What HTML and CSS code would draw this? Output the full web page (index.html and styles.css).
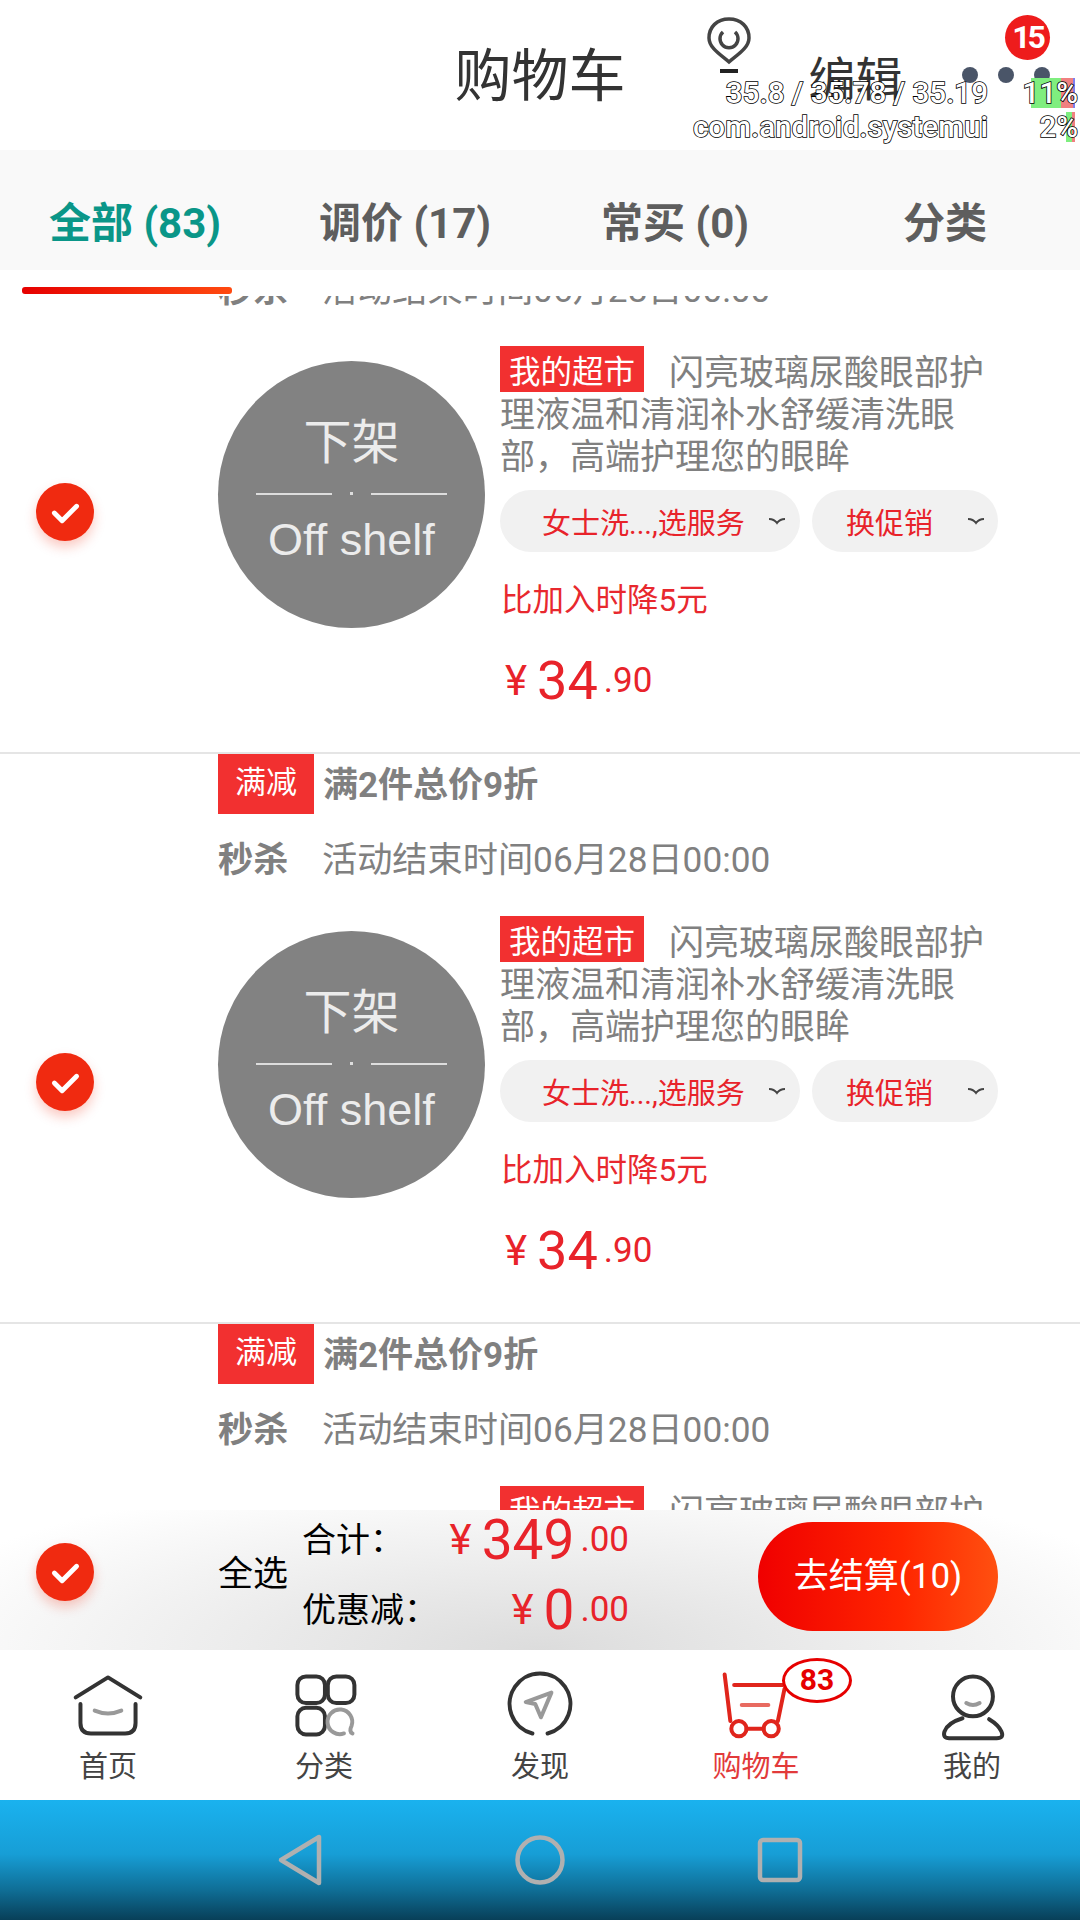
FILE: index.html
```html
<!DOCTYPE html>
<html lang="zh-CN">
<head>
  <meta charset="utf-8">
  <title>购物车</title>
  <link rel="stylesheet" href="styles.css">
</head>
<body>
<div class="app">
  <header class="header">
    <div></div>
    <h1 class="header-title">购物车</h1>
    <div class="header-edit">编辑</div>
  </header>

  <nav class="tabs">
    <div class="tab active">全部 (83)</div>
    <div class="tab">调价 (17)</div>
    <div class="tab">常买 (0)</div>
    <div class="tab">分类</div>
  </nav>
  <div class="tab-strip"><div class="tab-indicator"></div></div>

  <div class="list">
    <div class="list-inner">
      <section class="item">
        <div class="promo-row"><span class="promo-badge">满减</span><span class="promo-text">满2件总价9折</span></div>
        <div class="flash-row"><span class="flash-label">秒杀</span><span class="flash-time">活动结束时间06月28日00:00</span></div>
        <div class="item-main">
          <div class="item-check"><span class="check"><svg viewBox="0 0 60 60"><path d="M19 31l8 8 15-15" /></svg></span></div>
          <div class="shelf">
            <div class="shelf-cn">下架</div>
            <div class="shelf-line"><i></i><b></b><i></i></div>
            <div class="shelf-en">Off shelf</div>
          </div>
          <div class="info">
            <div class="title"><span class="shop-badge">我的超市</span>闪亮玻璃尿酸眼部护理液温和清润补水舒缓清洗眼部，高端护理您的眼眸</div>
            <div class="pills">
              <div class="pill pill-service">女士洗...,选服务<svg class="chev" viewBox="0 0 18 8"><path d="M1 2q5 0 8 4q3-4 8-4" /></svg></div>
              <div class="pill pill-promo">换促销<svg class="chev" viewBox="0 0 18 8"><path d="M1 2q5 0 8 4q3-4 8-4" /></svg></div>
            </div>
            <div class="drop-note">比加入时降5元</div>
            <div class="price"><span class="yen">¥</span><span class="int">34</span><span class="dec">.90</span></div>
          </div>
        </div>
      </section>

      <section class="item">
        <div class="promo-row"><span class="promo-badge">满减</span><span class="promo-text">满2件总价9折</span></div>
        <div class="flash-row"><span class="flash-label">秒杀</span><span class="flash-time">活动结束时间06月28日00:00</span></div>
        <div class="item-main">
          <div class="item-check"><span class="check"><svg viewBox="0 0 60 60"><path d="M19 31l8 8 15-15" /></svg></span></div>
          <div class="shelf">
            <div class="shelf-cn">下架</div>
            <div class="shelf-line"><i></i><b></b><i></i></div>
            <div class="shelf-en">Off shelf</div>
          </div>
          <div class="info">
            <div class="title"><span class="shop-badge">我的超市</span>闪亮玻璃尿酸眼部护理液温和清润补水舒缓清洗眼部，高端护理您的眼眸</div>
            <div class="pills">
              <div class="pill pill-service">女士洗...,选服务<svg class="chev" viewBox="0 0 18 8"><path d="M1 2q5 0 8 4q3-4 8-4" /></svg></div>
              <div class="pill pill-promo">换促销<svg class="chev" viewBox="0 0 18 8"><path d="M1 2q5 0 8 4q3-4 8-4" /></svg></div>
            </div>
            <div class="drop-note">比加入时降5元</div>
            <div class="price"><span class="yen">¥</span><span class="int">34</span><span class="dec">.90</span></div>
          </div>
        </div>
      </section>

      <section class="item">
        <div class="promo-row"><span class="promo-badge">满减</span><span class="promo-text">满2件总价9折</span></div>
        <div class="flash-row"><span class="flash-label">秒杀</span><span class="flash-time">活动结束时间06月28日00:00</span></div>
        <div class="item-main">
          <div class="item-check"></div>
          <div class="shelf shelf-empty"></div>
          <div class="info">
            <div class="title"><span class="shop-badge">我的超市</span>闪亮玻璃尿酸眼部护理液温和清润补水舒缓清洗眼部，高端护理您的眼眸</div>
          </div>
        </div>
      </section>
    </div>
  </div>

  <div class="total-bar">
    <div class="total-check"><span class="check"><svg viewBox="0 0 60 60"><path d="M19 31l8 8 15-15" /></svg></span></div>
    <div class="select-all">全选</div>
    <div class="sums">
      <div class="sum-row">
        <span class="sum-label">合计：</span>
        <span class="sum-price"><span class="yen">¥</span><span class="int">349</span><span class="dec">.00</span></span>
      </div>
      <div class="sum-row">
        <span class="sum-label">优惠减：</span>
        <span class="sum-price"><span class="yen">¥</span><span class="int">0</span><span class="dec">.00</span></span>
      </div>
    </div>
    <div class="checkout">去结算(10)</div>
  </div>

  <nav class="bottom-nav">
    <div class="nav-item">
      <svg class="nav-icon" viewBox="0 0 80 80">
        <path d="M6 33L40 12L74 33M11 40V60q0 11 11 11H58q11 0 11-11V40" />
        <path class="soft" d="M26 47Q40 53 54 47" />
      </svg>
      <span>首页</span>
    </div>
    <div class="nav-item">
      <svg class="nav-icon" viewBox="0 0 80 80">
        <rect x="12" y="11" width="29" height="28" rx="9" />
        <rect x="44" y="11" width="28" height="28" rx="9" />
        <rect x="12" y="44" width="29" height="28" rx="9" />
        <path class="soft" d="M70 71Q66 69 69 63A13 13 0 1 0 61 71" />
      </svg>
      <span>分类</span>
    </div>
    <div class="nav-item">
      <svg class="nav-icon" viewBox="0 0 80 80">
        <path d="M48 71A32 32 0 1 0 32 71" />
        <path class="soft" d="M52 28L25 38L35 40L41 54Z" />
      </svg>
      <span>发现</span>
    </div>
    <div class="nav-item active">
      <svg class="nav-icon" viewBox="0 0 80 80">
        <path d="M7 9L13 58M17 20H68M70 24L63 58M30 66H48" />
        <path class="soft" d="M25 41H53" />
        <circle cx="22" cy="66" r="8" />
        <circle cx="56" cy="66" r="8" />
      </svg>
      <span>购物车</span>
      <em class="cart-count">83</em>
    </div>
    <div class="nav-item">
      <svg class="nav-icon" viewBox="0 0 80 80">
        <circle cx="41" cy="32" r="21" />
        <path class="soft" d="M34 39Q41 43 48 39" />
        <path d="M30 55Q14 60 11 69Q9 76 16 76H66Q74 76 71 69Q68 62 58 56" />
      </svg>
      <span>我的</span>
    </div>
  </nav>

  <div class="sys-nav">
    <svg class="sys-icon" viewBox="0 0 60 60"><path d="M11 30L49 7V53Z" /></svg>
    <svg class="sys-icon" viewBox="0 0 60 60"><circle cx="30" cy="30" r="22.5" /></svg>
    <svg class="sys-icon" viewBox="0 0 60 60"><rect x="10" y="10" width="40" height="40" rx="3" /></svg>
  </div>

  <!-- debug overlays on top of the app -->
  <svg class="float-pin" viewBox="0 0 44 56">
    <path d="M22 2C10 2 2 10 2 21C2 31 14 38 22 45C30 38 42 31 42 21C42 10 34 2 22 2Z" />
    <path d="M16 15A9 9 0 1 0 28 15" />
    <path class="pin-base" d="M13 54H31" />
  </svg>
  <div class="float-count">15</div>
  <div class="float-dots"><i></i><i></i><i></i></div>
  <div class="cpu-stats">
    <div class="cpu-text">35.8 / 35.78 / 35.19</div>
    <div class="cpu-pct"><span class="cpu-bar bar-total"><i class="g"></i><i class="r"></i><i class="b"></i></span><span class="cpu-num">11%</span></div>
    <div class="cpu-text">com.android.systemui</div>
    <div class="cpu-pct"><span class="cpu-bar bar-proc"><i class="g"></i><i class="r"></i></span><span class="cpu-num">2%</span></div>
  </div>
</div>
</body>
</html>
```

FILE: styles.css
```css
* {
  box-sizing: border-box;
}
body {
  margin: 0;
  background: #fff;
  font-family: Roboto, "Noto Sans CJK SC", sans-serif;
}
.app {
  position: relative;
  width: 1080px;
  height: 1920px;
  display: flex;
  flex-direction: column;
  overflow: hidden;
}

/* header */
.header {
  height: 150px;
  flex: none;
  display: grid;
  grid-template-columns: 1fr auto 1fr;
  align-items: center;
  background: #fff;
  color: #333;
}
.header-title {
  margin: 0 0 8px;
  font-size: 57px;
  font-weight: 400;
}
.header-edit {
  margin-left: 183px;
  font-size: 47px;
}

/* tabs */
.tabs {
  height: 120px;
  flex: none;
  padding-top: 19px;
  display: grid;
  grid-template-columns: repeat(4, 1fr);
  align-items: center;
  background: #f9f9f9;
}
.tab {
  text-align: center;
  font-size: 42px;
  font-weight: 700;
  color: #5e5e5e;
}
.tab.active {
  color: #0a9688;
}
.tab-strip {
  height: 26px;
  flex: none;
  padding: 17px 0 0 22px;
  background: #fff;
}
.tab-indicator {
  width: 210px;
  height: 7px;
  border-radius: 3px;
  background: linear-gradient(90deg, #e60000, #ff4a10);
}

/* cart list */
.list {
  flex: 1;
  min-height: 0;
  overflow: hidden;
}
.list-inner {
  margin-top: -114px;
}
.item {
  height: 570px;
  border-top: 2px solid #e5e5e5;
}
.promo-row {
  height: 60px;
  padding-left: 218px;
  display: flex;
  align-items: center;
}
.promo-badge {
  width: 96px;
  height: 60px;
  line-height: 58px;
  text-align: center;
  font-size: 31px;
  color: #fff;
  background: #f23030;
}
.promo-text {
  margin: 0 0 6px 9px;
  font-size: 35px;
  font-weight: 700;
  color: #808080;
}
.flash-row {
  height: 60px;
  margin-top: 12px;
  padding-left: 218px;
  display: flex;
  align-items: center;
  font-size: 35.2px;
  color: #808080;
}
.flash-label {
  width: 104px;
  font-weight: 700;
}
.item-main {
  margin-top: 35px;
  display: flex;
}
.item-check {
  width: 218px;
  flex: none;
  padding: 132px 0 0 36px;
}
.check {
  display: block;
  width: 58px;
  height: 58px;
  border-radius: 50%;
  background: #f02a10;
  box-shadow: 0 6px 12px rgba(240, 42, 16, 0.25);
}
.check svg {
  display: block;
  width: 58px;
  height: 58px;
  fill: none;
  stroke: #fff;
  stroke-width: 5;
  stroke-linecap: round;
  stroke-linejoin: round;
}

/* off shelf picture */
.shelf {
  width: 267px;
  height: 267px;
  flex: none;
  margin-top: 10px;
  border-radius: 50%;
  display: flex;
  flex-direction: column;
  align-items: center;
  background: #828282;
  color: #ececec;
}
.shelf-empty {
  background: none;
}
.shelf-cn {
  margin-top: 47px;
  line-height: 70px;
  font-size: 48px;
}
.shelf-line {
  margin-top: 14px;
  display: flex;
  align-items: center;
  gap: 18px;
}
.shelf-line i {
  display: block;
  width: 76px;
  height: 2px;
  background: #ddd;
}
.shelf-line b {
  display: block;
  width: 3px;
  height: 3px;
  background: #ddd;
}
.shelf-en {
  margin-top: 15px;
  line-height: 60px;
  font-size: 45px;
  font-family: "Liberation Sans", sans-serif;
}

/* product text */
.info {
  width: 488px;
  margin-left: 15px;
  padding-top: 2px;
}
.title {
  line-height: 42px;
  font-size: 35px;
  color: #808080;
}
.shop-badge {
  margin-right: 25px;
  padding: 8px 9px 1px;
  vertical-align: 2px;
  line-height: 1;
  font-size: 31.5px;
  color: #fff;
  background: #f23030;
}
.pills {
  margin-top: 11px;
  display: flex;
  gap: 12px;
}
.pill {
  height: 62px;
  flex: none;
  display: flex;
  align-items: center;
  border-radius: 31px;
  background: #f1f1f1;
  font-size: 29px;
  color: #e8232a;
}
.pill-service {
  width: 300px;
  padding-left: 42px;
}
.pill-promo {
  width: 186px;
  padding-left: 34px;
}
.chev {
  width: 18px;
  height: 8px;
  margin-left: 23px;
  fill: none;
  stroke: #444;
  stroke-width: 2;
}
.pill-promo .chev {
  margin-left: 34px;
}
.drop-note {
  margin-top: 29px;
  margin-left: 1px;
  line-height: 40px;
  font-size: 31.5px;
  color: #e8282e;
}
.price {
  height: 70px;
  margin-top: 24px;
  margin-left: 5px;
  display: flex;
  align-items: center;
  color: #e8232a;
}
.yen {
  font-size: 42px;
}
.int {
  margin-left: 10px;
  font-size: 54px;
}
.dec {
  margin-left: 6px;
  font-size: 35px;
}

/* total bar */
.total-bar {
  height: 140px;
  flex: none;
  display: flex;
  background: radial-gradient(ellipse 62% 130% at 50% 100%, #dcdcdc, #fff);
}
.total-check {
  width: 218px;
  flex: none;
  padding: 33px 0 0 36px;
}
.select-all {
  width: 84px;
  flex: none;
  padding-top: 39px;
  line-height: 52px;
  font-size: 35px;
  color: #000;
}
.sums {
  width: 327px;
  flex: none;
  display: flex;
  flex-direction: column;
  gap: 10px;
}
.sum-row {
  height: 60px;
  display: flex;
  align-items: center;
  justify-content: space-between;
  line-height: 60px;
}
.sum-label {
  font-size: 34px;
  color: #000;
}
.sum-price {
  display: flex;
  align-items: center;
  color: #e8232a;
}
.sum-price .int {
  font-size: 55px;
}
.sum-price .dec {
  font-size: 35px;
}
.checkout {
  width: 240px;
  height: 109px;
  margin: 12px 82px 0 auto;
  flex: none;
  border-radius: 55px;
  text-align: center;
  line-height: 109px;
  font-size: 35px;
  color: #fff;
  background: linear-gradient(90deg, #f00000, #ff2600 60%, #ff5010);
}

/* bottom navigation */
.bottom-nav {
  position: relative;
  height: 150px;
  flex: none;
  display: grid;
  grid-template-columns: repeat(5, 216px);
  background: #fff;
}
.nav-item {
  position: relative;
  display: flex;
  flex-direction: column;
  align-items: center;
  padding-top: 16px;
  font-size: 29px;
  color: #444;
}
.nav-item span {
  line-height: 42px;
  margin-top: 4px;
}
.nav-icon {
  width: 76px;
  height: 76px;
  fill: none;
  stroke: #333;
  stroke-width: 4.2;
  stroke-linecap: round;
  stroke-linejoin: round;
}
.nav-icon .soft {
  stroke: #999;
}
.nav-item.active {
  color: #e23a3a;
}
.nav-item.active .nav-icon {
  stroke: #e0251c;
}
.nav-item.active .nav-icon .soft {
  stroke: #e86a60;
}
.cart-count {
  position: absolute;
  left: 134px;
  top: 8px;
  width: 70px;
  height: 45px;
  border: 3px solid #e60000;
  border-radius: 50%;
  text-align: center;
  line-height: 37px;
  font-style: normal;
  font-weight: 700;
  font-size: 30px;
  color: #e60000;
  background: #fff;
}

/* system bar */
.sys-nav {
  height: 120px;
  flex: none;
  display: flex;
  justify-content: center;
  align-items: center;
  gap: 180px;
  background: linear-gradient(180deg, #1ab2ef 0%, #179ed6 45%, #0f6e96 75%, #083f58 100%);
}
.sys-icon {
  width: 60px;
  height: 60px;
  fill: none;
  stroke: #b0b0b0;
  stroke-width: 4.5;
  stroke-linejoin: round;
}

/* debug overlays */
.float-pin {
  position: absolute;
  left: 707px;
  top: 17px;
  width: 44px;
  height: 56px;
  fill: none;
  stroke: #444;
  stroke-width: 3.5;
}
.float-pin .pin-base {
  stroke: #222;
  stroke-width: 4;
}
.float-count {
  position: absolute;
  left: 1005px;
  top: 15px;
  width: 45px;
  height: 45px;
  border-radius: 50%;
  text-align: center;
  line-height: 45px;
  font-size: 32px;
  font-weight: 700;
  letter-spacing: -3px;
  color: #fff;
  background: #ee1c1c;
}
.float-dots {
  position: absolute;
  left: 962px;
  top: 67px;
  display: flex;
  gap: 20px;
}
.float-dots i {
  display: block;
  width: 16px;
  height: 16px;
  border-radius: 50%;
  background: #4a5568;
}
.cpu-stats {
  position: absolute;
  right: 2px;
  top: 76px;
  display: grid;
  grid-template-columns: auto 90px;
  font-family: Roboto, sans-serif;
  font-size: 29.6px;
  font-weight: 500;
  line-height: 34px;
  color: #fff;
  -webkit-text-stroke: 1.6px #000;
  paint-order: stroke fill;
}
.cpu-text {
  text-align: right;
  height: 34px;
}
.cpu-pct {
  position: relative;
  height: 34px;
  text-align: right;
}
.cpu-num {
  position: relative;
}
.cpu-bar {
  position: absolute;
  top: 2px;
  right: 3px;
  height: 30px;
  display: flex;
}
.cpu-bar i {
  display: block;
  height: 100%;
}
.bar-total .g {
  width: 30px;
  background: #7fee7f;
}
.bar-total .r {
  width: 12px;
  background: #f08080;
}
.bar-total .b {
  width: 2px;
  background: #7f7fee;
}
.bar-proc .g {
  width: 6px;
  background: #7fee7f;
}
.bar-proc .r {
  width: 3px;
  background: #f08080;
}
```
